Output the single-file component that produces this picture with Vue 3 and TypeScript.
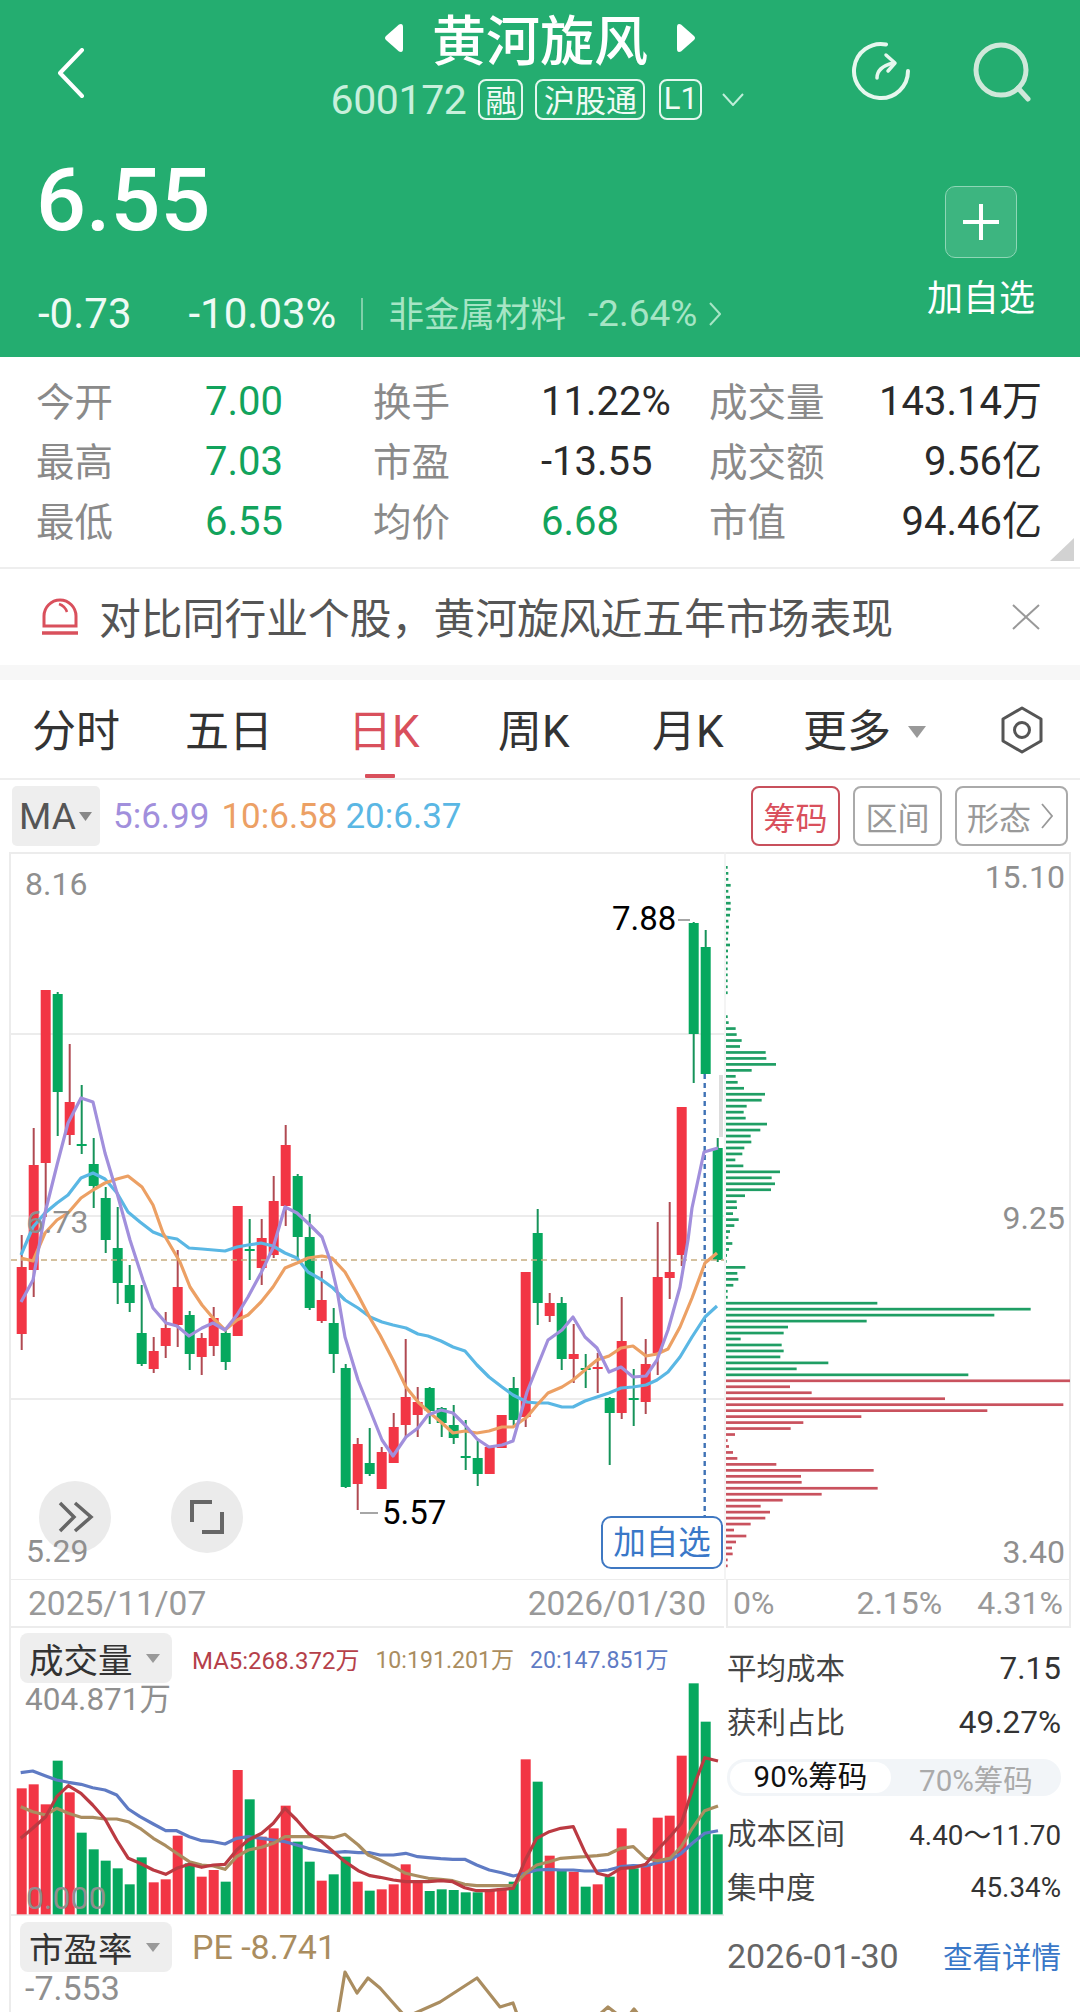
<script setup lang="ts">
type Candle = [number, number, number, number, 'r' | 'g']
const candleData: Candle[] = [
  [1235,1267,1334,1350,'r'],[1128,1165,1270,1297,'r'],[990,990,1163,1217,'r'],[992,994,1092,1136,'g'],
  [1044,1102,1135,1145,'r'],[1085,1144,1146,1154,'g'],[1138,1164,1186,1208,'g'],[1187,1198,1240,1253,'g'],
  [1207,1248,1283,1304,'g'],[1265,1285,1303,1312,'g'],[1285,1333,1364,1366,'g'],[1337,1351,1369,1373,'r'],
  [1312,1328,1346,1358,'r'],[1250,1287,1325,1347,'r'],[1311,1315,1354,1370,'g'],[1333,1338,1357,1375,'r'],
  [1307,1318,1346,1356,'r'],[1330,1333,1362,1370,'g'],[1206,1206,1336,1336,'r'],[1219,1249,1251,1280,'g'],
  [1219,1238,1268,1285,'r'],[1176,1201,1255,1258,'r'],[1125,1145,1206,1226,'r'],[1174,1176,1237,1260,'g'],
  [1214,1237,1308,1310,'g'],[1271,1300,1321,1323,'r'],[1308,1323,1354,1373,'g'],[1364,1368,1487,1488,'g'],
  [1438,1444,1484,1510,'r'],[1428,1463,1474,1476,'g'],[1447,1452,1489,1489,'r'],[1413,1427,1463,1463,'r'],
  [1339,1397,1425,1437,'r'],[1387,1402,1415,1437,'r'],[1387,1388,1411,1424,'g'],[1407,1408,1423,1437,'g'],
  [1405,1425,1438,1444,'g'],[1420,1456,1458,1470,'g'],[1440,1458,1474,1486,'g'],[1447,1447,1474,1474,'r'],
  [1415,1415,1448,1448,'r'],[1377,1388,1420,1427,'g'],[1272,1272,1417,1427,'r'],[1209,1233,1303,1325,'g'],
  [1293,1303,1316,1322,'r'],[1297,1303,1359,1370,'g'],[1324,1354,1359,1383,'r'],[1354,1368,1370,1388,'g'],
  [1353,1367,1369,1393,'r'],[1397,1398,1413,1465,'g'],[1297,1341,1413,1419,'r'],[1369,1398,1400,1426,'g'],
  [1339,1364,1402,1414,'r'],[1222,1277,1353,1375,'r'],[1202,1272,1278,1299,'r'],[1107,1107,1255,1266,'r'],
  [922,923,1034,1083,'g'],[930,947,1074,1074,'g'],[1138,1148,1260,1262,'g']
]
const cx = (i: number) => 21.7 + 12 * i
const candles = candleData.map((c, i) => ({
  x: cx(i), hi: c[0], top: c[1], h: c[2] - c[1], lo: c[3], red: c[4] === 'r'
}))

const ma5 = '21,1302 33,1280 45,1213 57,1165 68,1123 81,1098 93,1102 105,1153 117,1193 130,1240 143,1280 153,1308 166,1323 177,1326 189,1336 202,1328 213,1323 225,1330 237,1315 248,1297 261,1273 273,1248 285,1207 297,1213 310,1225 322,1237 330,1260 337,1290 345,1337 358,1380 370,1410 382,1440 393,1456 406,1437 418,1428 428,1415 441,1410 453,1413 465,1425 477,1439 489,1447 502,1445 513,1441 527,1392 548,1340 562,1330 573,1317 585,1337 597,1348 609,1372 621,1367 633,1377 646,1376 657,1360 668,1330 680,1287 688,1240 692,1208 704,1152 718,1148'
const ma10 = '21,1258 33,1261 45,1233 57,1220 68,1213 81,1198 93,1190 105,1183 117,1179 128,1176 142,1187 153,1205 163,1233 173,1250 180,1262 190,1287 202,1305 213,1318 225,1330 237,1320 248,1315 261,1302 273,1287 285,1268 297,1263 308,1258 322,1256 332,1258 345,1272 358,1295 370,1318 380,1335 393,1360 406,1387 418,1402 430,1413 442,1423 453,1433 465,1431 477,1433 489,1431 502,1427 513,1427 527,1417 537,1405 548,1393 562,1387 573,1380 585,1370 597,1360 609,1356 621,1348 633,1346 646,1356 657,1354 668,1349 680,1327 692,1298 705,1263 717,1253'
const ma20 = '21,1255 33,1227 45,1213 57,1203 68,1195 81,1178 93,1173 105,1179 117,1193 128,1212 140,1222 153,1232 166,1237 177,1239 189,1248 202,1249 225,1251 237,1247 248,1245 261,1243 273,1246 285,1253 297,1258 308,1272 322,1280 333,1288 345,1300 358,1308 370,1317 382,1322 393,1325 406,1328 418,1334 428,1336 441,1341 453,1347 465,1351 477,1365 489,1377 502,1387 513,1395 527,1402 537,1403 548,1403 562,1407 573,1407 585,1401 597,1397 609,1393 621,1388 633,1387 646,1385 657,1380 668,1372 680,1357 692,1337 705,1317 717,1306'

const chipU: number[] = [
  83,85,85,92,85,90,92,92,90,85,87,85,84,90,84,84,83,83,83,83,83,83,0,0,0,
  83,86,107,110,125,120,197,199,228,155,107,113,132,195,185,140,131,137,201,181,152,154,133,127,106,130,240,215,225,213,135,110,111,99,116,103,90,85,97,
  87,81,80,136,112,115,100,83,83,532,992,883,500,264,251,122,245,251,241,385,290,805,
  1110,270,335,735,1090,862,484,310,272,105,83,87,99,112,229,521,303,305,533,365,248,182,210,196,152,102,139,108,96,98,83,83
]
const chips = chipU.map((u, i) => ({ y: 867.33 + i * 5.97 - 1.3, w: u ? (u - 78) / 3 : 0, red: i >= 86 })).filter(c => c.w > 0)

const volTops = [505,493,553,422,517,638,688,722,745,793,712,787,778,647,730,770,750,785,450,538,650,625,557,665,725,782,763,710,785,812,808,793,733,785,813,808,810,817,817,810,805,785,418,485,707,750,755,800,793,770,625,745,735,593,587,407,190,305,643]
const volumes = volTops.map((v, i) => ({ x: cx(i) - 5, y: 1620 + v / 3, h: (883 - v) / 3, red: candleData[i][4] === 'r' }))

const toLine = (pts: number[][], ox: number) => pts.map(p => `${(ox + p[0] / 3).toFixed(1)},${(1620 + p[1] / 3).toFixed(1)}`).join(' ')
const vBlue = toLine([[62,458],[98,453],[137,468],[170,480],[205,487],[243,493],[278,503],[315,510],[350,525],[385,567],[420,590],[460,612],[497,632],[530,632],[568,650],[605,662],[640,665],[675,672],[710,655],[745,650],[785,655],[820,660],[855,665],[890,675],[925,685],[965,692],[1000,698],[1035,695],[1075,698],[1110,698],[1140,705]], 0) + ' ' +
  toLine([[0,705],[40,705],[77,700],[113,710],[145,713],[182,716],[218,718],[254,718],[290,735],[328,750],[365,758],[400,768],[436,760],[470,750],[508,748],[542,750],[580,750],[614,753],[652,753],[685,750],[722,740],[760,737],[797,738],[832,728],[870,720],[904,700],[937,670],[974,640],[1014,632]], 380)
const vTan = toLine([[62,560],[98,575],[137,585],[170,565],[205,580],[243,592],[278,592],[315,597],[350,597],[385,605],[420,625],[460,655],[497,677],[530,700],[568,725],[605,735],[640,738],[675,748],[710,710],[745,690],[785,682],[820,670],[855,650],[890,650],[925,650],[965,650],[1000,653],[1035,643],[1075,675],[1105,705],[1140,720]], 0) + ' ' +
  toLine([[0,720],[40,740],[77,760],[113,768],[145,775],[182,778],[218,782],[254,793],[290,797],[328,797],[365,797],[400,797],[436,760],[470,735],[508,725],[542,715],[580,712],[614,710],[652,707],[685,703],[722,685],[760,680],[797,715],[832,722],[870,715],[904,680],[937,625],[974,572],[1014,558]], 380)
const vRed = toLine([[62,655],[98,625],[137,590],[170,530],[205,497],[243,520],[278,555],[315,597],[350,660],[385,715],[420,730],[460,750],[497,763],[530,745],[568,733],[605,742],[640,735],[675,733],[710,690],[745,660],[785,640],[820,610],[855,565],[890,600],[925,640],[965,665],[1000,695],[1035,725],[1075,752],[1110,767],[1140,772]], 0) + ' ' +
  toLine([[0,772],[40,780],[77,785],[113,785],[145,785],[182,782],[218,785],[254,803],[290,812],[328,812],[365,808],[400,805],[436,720],[470,655],[508,635],[542,625],[580,620],[614,695],[652,760],[685,768],[722,745],[760,743],[797,733],[832,690],[870,650],[904,610],[937,510],[974,413],[1014,423]], 380)
const peLine = '337,2020 345,1972 357,1993 368,1978 380,1988 403,2014 413,2014 440,2002 477,1978 500,2007 513,2003 517,2014'
const peLine2 = '600,2014 608,2007 617,2014 630,2014 634,2009 638,2014'

const stats = [
  { label: '今开', value: '7.00', tone: 'green', label2: '换手', value2: '11.22%', tone2: 'dark', label3: '成交量', value3: '143.14万' },
  { label: '最高', value: '7.03', tone: 'green', label2: '市盈', value2: '-13.55', tone2: 'dark', label3: '成交额', value3: '9.56亿' },
  { label: '最低', value: '6.55', tone: 'green', label2: '均价', value2: '6.68', tone2: 'green', label3: '市值', value3: '94.46亿' }
]
const tabs = [
  { t: '分时', w: 153 }, { t: '五日', w: 163 }, { t: '日K', w: 150, on: true },
  { t: '周K', w: 154 }, { t: '月K', w: 151 }
]
const grid = [1034, 1216, 1399, 1580]
</script>

<template>
  <div class="page">
    <header class="hero">
      <div class="nav">
        <div class="nav-left">
          <svg width="30" height="50" viewBox="0 0 30 50"><path d="M26 2 L4 25 L26 48" fill="none" stroke="#fff" stroke-width="4" stroke-linecap="round" stroke-linejoin="round" /></svg>
        </div>
        <div class="nav-center">
          <div class="title-row">
            <svg width="20" height="30" viewBox="0 0 20 30"><path d="M15 1.500 Q19 0 19 4 L19 26 Q19 30 15 28.500 L2 17 Q0 15 2 13 Z" fill="#fff" /></svg>
            <span class="title">黄河旋风</span>
            <svg width="20" height="30" viewBox="0 0 20 30"><path d="M5 1.500 Q1 0 1 4 L1 26 Q1 30 5 28.500 L18 17 Q20 15 18 13 Z" fill="#fff" /></svg>
          </div>
          <div class="code-row">
            <span class="code">600172</span>
            <span class="tag">融</span>
            <span class="tag wide">沪股通</span>
            <span class="tag l1">L1</span>
            <svg class="caret" width="22" height="13" viewBox="0 0 22 13"><path d="M1 1 L11 12 L21 1" fill="none" stroke="#bfeeda" stroke-width="2" /></svg>
          </div>
        </div>
        <div class="nav-right">
          <svg width="62" height="62" viewBox="0 0 62 62">
            <path d="M36 3.500 A27 27 0 1 0 58 30" fill="none" stroke="#e6f7ee" stroke-width="4" stroke-linecap="round" />
            <path d="M27 37 Q27 26 43 22" fill="none" stroke="#e6f7ee" stroke-width="3.500" stroke-linecap="round" />
            <path d="M36 14 L45 22 L38 30" fill="none" stroke="#e6f7ee" stroke-width="3.500" stroke-linecap="round" stroke-linejoin="round" />
          </svg>
          <svg width="62" height="62" viewBox="0 0 62 62">
            <circle cx="29" cy="29" r="25" fill="none" stroke="#cfe8da" stroke-width="5" />
            <path d="M46 47 L56 58" stroke="#cfe8da" stroke-width="5" stroke-linecap="round" />
          </svg>
        </div>
      </div>
      <div class="quote">
        <div class="quote-left">
          <div class="price">6.55</div>
          <div class="change-row">
            <span class="chg">-0.73</span>
            <span class="chg pct">-10.03%</span>
            <span class="sep"></span>
            <span class="industry">非金属材料</span>
            <span class="industry-pct">-2.64%</span>
            <svg width="12" height="24" viewBox="0 0 12 24"><path d="M1 1 L11 12 L1 23" fill="none" stroke="#a6e5c5" stroke-width="2" /></svg>
          </div>
        </div>
        <div class="add">
          <div class="add-box"><svg width="38" height="38" viewBox="0 0 38 38"><path d="M19 1 V37 M1 19 H37" stroke="#fff" stroke-width="4" /></svg></div>
          <div class="add-label">加自选</div>
        </div>
      </div>
    </header>

    <section class="stats">
      <div v-for="r in stats" :key="r.label" class="stat-row">
        <span class="s-label">{{ r.label }}</span>
        <span class="s-value" :class="r.tone">{{ r.value }}</span>
        <span class="s-label">{{ r.label2 }}</span>
        <span class="s-value" :class="r.tone2">{{ r.value2 }}</span>
        <span class="s-label">{{ r.label3 }}</span>
        <span class="s-value dark end">{{ r.value3 }}</span>
      </div>
      <span class="corner"></span>
    </section>

    <section class="alert">
      <svg width="38" height="38" viewBox="0 0 38 38">
        <path d="M3 28 V18 A16 16 0 0 1 35 18 V28 Z" fill="none" stroke="#d9505c" stroke-width="3" />
        <path d="M18 6 Q24 8 26 14" fill="none" stroke="#d9505c" stroke-width="2.500" />
        <path d="M1 35 H37" stroke="#d9505c" stroke-width="3.500" />
      </svg>
      <span class="alert-text">对比同行业个股，黄河旋风近五年市场表现</span>
      <svg class="alert-x" width="28" height="26" viewBox="0 0 28 26"><path d="M1 1 L27 25 M27 1 L1 25" stroke="#999" stroke-width="2" /></svg>
    </section>
    <div class="band"></div>

    <nav class="tabs">
      <div v-for="t in tabs" :key="t.t" class="tab" :class="{ on: t.on }" :style="{ width: t.w + 'px' }">{{ t.t }}</div>
      <div class="tab more">更多<svg width="18" height="12" viewBox="0 0 18 12"><path d="M0 0 H18 L9 12 Z" fill="#999" /></svg></div>
      <svg class="hex" width="44" height="48" viewBox="0 0 44 48">
        <path d="M22 2 L41 13 V35 L22 46 L3 35 V13 Z" fill="none" stroke="#555" stroke-width="3" stroke-linejoin="round" />
        <circle cx="22" cy="24" r="7.500" fill="none" stroke="#555" stroke-width="3" />
      </svg>
    </nav>

    <div class="toolbar">
      <div class="ma-box">MA<svg width="13" height="9" viewBox="0 0 13 9"><path d="M0 0 H13 L6.500 9 Z" fill="#888" /></svg></div>
      <span class="ma m5">5:6.99</span>
      <span class="ma m10">10:6.58</span>
      <span class="ma m20">20:6.37</span>
      <span class="spacer"></span>
      <span class="pill-btn on">筹码</span>
      <span class="pill-btn">区间</span>
      <span class="pill-btn wide">形态<svg width="12" height="26" viewBox="0 0 12 26"><path d="M1 1 L11 13 L1 25" fill="none" stroke="#999" stroke-width="1.800" /></svg></span>
    </div>

    <div class="charts">
      <div class="col-left">
        <svg class="kline" width="724" height="728" viewBox="0 852 724 728">
          <line x1="9" x2="724" y1="853" y2="853" class="gl" />
          <line x1="10" x2="10" y1="852" y2="1581" class="gl" />
          <line v-for="g in grid" :key="g" x1="9" x2="724" :y1="g" :y2="g" class="gl" />
          <text x="25" y="895" class="axis">8.16</text>
          <g v-for="(c, i) in candles" :key="i">
            <line :x1="c.x" :x2="c.x" :y1="c.hi" :y2="c.lo" :stroke="c.red ? '#b04a52' : '#16935a'" stroke-width="2" />
            <rect :x="c.x - 5" :y="c.top" width="10" :height="c.h" :fill="c.red ? '#f23645' : '#06a85e'" />
          </g>
          <line x1="11" x2="724" y1="1260" y2="1260" stroke="#c6ad80" stroke-width="1.500" stroke-dasharray="6 4" />
          <line x1="704.700" x2="704.700" y1="1074" y2="1518" stroke="#3f72b5" stroke-width="2.400" stroke-dasharray="5 4" />
          <polyline :points="ma20" class="ln" stroke="#5ab7e4" />
          <polyline :points="ma10" class="ln" stroke="#eca064" />
          <polyline :points="ma5" class="ln" stroke="#a18fdc" />
          <text x="26" y="1233" class="axis">6.73</text>
          <rect x="719" y="1075" width="4" height="62" fill="#ddd" />
          <text x="612" y="930" class="mark">7.88</text>
          <line x1="678" x2="690" y1="920" y2="920" stroke="#888" stroke-width="1.500" />
          <text x="382" y="1524" class="mark">5.57</text>
          <line x1="360" x2="378" y1="1513" y2="1513" stroke="#888" stroke-width="1.500" />
          <circle cx="75" cy="1517" r="36" fill="#ebebeb" />
          <path d="M60 1503 L74 1517 L60 1531 M75 1503 L91 1517 L75 1531" fill="none" stroke="#666" stroke-width="3.500" />
          <circle cx="207" cy="1517" r="36" fill="#ebebeb" />
          <path d="M192 1522 V1502 H212 M222 1512 V1532 H202" fill="none" stroke="#666" stroke-width="4" />
          <text x="26" y="1562" class="axis">5.29</text>
          <rect x="602" y="1517" width="120" height="51" rx="9" fill="#fff" stroke="#3f78c2" stroke-width="2" />
          <text x="662" y="1554" class="fav" text-anchor="middle">加自选</text>
        </svg>
        <div class="dates"><span>2025/11/07</span><span>2026/01/30</span></div>
        <div class="volume">
          <svg class="vol-svg" width="724" height="384" viewBox="0 1628 724 384">
            <line x1="10" x2="10" y1="1628" y2="2012" class="gl" />
            <line x1="9" x2="724" y1="1915" y2="1915" class="gl" />
            <rect v-for="(b, i) in volumes" :key="i" :x="b.x" :y="b.y" width="10" :height="b.h" :fill="b.red ? '#f23645' : '#06a85e'" />
            <polyline :points="vBlue" class="ln3" stroke="#5f7bc4" />
            <polyline :points="vTan" class="ln3" stroke="#aa8d60" />
            <polyline :points="vRed" class="ln3" stroke="#bb3a42" />
            <text x="26" y="1909" class="axis">0.000</text>
            <polyline :points="peLine" class="ln3" stroke="#aa8d60" />
            <polyline :points="peLine2" class="ln3" stroke="#aa8d60" />
          </svg>
          <div class="ind-head first">
            <span class="ind-box">成交量<svg width="14" height="9" viewBox="0 0 14 9"><path d="M0 0 H14 L7 9 Z" fill="#999" /></svg></span>
            <span class="ind-ma lead c-red">MA5:268.372万</span>
            <span class="ind-ma c-tan">10:191.201万</span>
            <span class="ind-ma c-blue">20:147.851万</span>
          </div>
          <div class="ind-sub first-sub">404.871万</div>
          <div class="ind-head second">
            <span class="ind-box">市盈率<svg width="14" height="9" viewBox="0 0 14 9"><path d="M0 0 H14 L7 9 Z" fill="#999" /></svg></span>
            <span class="ind-pe c-tan">PE -8.741</span>
          </div>
          <div class="ind-sub second-sub">-7.553</div>
        </div>
      </div>

      <div class="col-right">
        <svg class="chips" width="356" height="728" viewBox="724 852 356 728">
          <line x1="724" x2="1071" y1="853" y2="853" class="gl" />
          <line x1="726" x2="1071" y1="1580" y2="1580" class="gl" />
          <line x1="725" x2="725" y1="852" y2="1580" stroke="#f0f0f0" stroke-width="1.500" />
          <line x1="1070" x2="1070" y1="852" y2="1580" class="gl" />
          <rect v-for="(c, i) in chips" :key="i" x="726" :y="c.y" :width="c.w" height="2.700" :fill="c.red ? '#c9525e' : '#1f9e64'" />
          <text x="1065" y="888" text-anchor="end" class="axis">15.10</text>
          <text x="1065" y="1229" text-anchor="end" class="axis">9.25</text>
          <text x="1065" y="1563" text-anchor="end" class="axis">3.40</text>
        </svg>
        <div class="pcts"><span>0%</span><span class="mid">2.15%</span><span class="last">4.31%</span></div>
        <div class="info">
          <div class="info-row"><span class="il">平均成本</span><span class="iv big">7.15</span></div>
          <div class="info-row"><span class="il">获利占比</span><span class="iv big">49.27%</span></div>
          <div class="seg"><span class="seg-on">90%筹码</span><span class="seg-off">70%筹码</span></div>
          <div class="info-row"><span class="il">成本区间</span><span class="iv">4.40～11.70</span></div>
          <div class="info-row"><span class="il">集中度</span><span class="iv">45.34%</span></div>
          <div class="info-row foot"><span class="foot-date">2026-01-30</span><span class="foot-link">查看详情</span></div>
        </div>
      </div>
    </div>
  </div>
</template>

<style scoped>
.page { width: 1080px; height: 2012px; overflow: hidden; background: #fff; font-family: Roboto, "Noto Sans CJK SC", sans-serif; color: #333; }
svg { display: block; flex: none; }

.hero { height: 357px; background: #24ad70; color: #fff; }
.nav { height: 128px; display: grid; grid-template-columns: 1fr auto 1fr; }
.nav-left { padding: 48px 0 0 56px; }
.nav-center { display: flex; flex-direction: column; align-items: center; }
.title-row { display: flex; align-items: center; gap: 28px; height: 76px; }
.title { font-size: 54px; line-height: 76px; font-family: "Noto Sans CJK SC", sans-serif; font-weight: 500; }
.code-row { display: flex; align-items: center; height: 41px; margin-top: 3px; margin-left: -5px; }
.code { font-size: 41px; letter-spacing: -0.4px; color: #c8f0dc; margin-right: 12px; }
.tag { height: 41px; width: 45px; box-sizing: border-box; border: 2px solid #e4f7ee; border-radius: 8px; font-size: 31px; line-height: 35px; text-align: center; color: #f0fbf5; margin-right: 12px; font-family: "Noto Sans CJK SC", sans-serif; }
.tag.wide { width: 110px; margin-right: 14px; }
.tag.l1 { width: 43px; font-family: Roboto, sans-serif; margin-right: 20px; }
.nav-right { display: flex; justify-content: flex-end; gap: 60px; padding: 41px 46px 0 0; }

.quote { display: flex; justify-content: space-between; padding: 0 46px 0 36px; }
.price { font-size: 88px; line-height: 90px; margin-top: 27px; font-weight: 500; }
.change-row { display: flex; align-items: center; height: 40px; margin-top: 49px; padding-left: 2px; }
.chg { font-size: 42px; color: #eefaf4; line-height: 40px; }
.pct { margin-left: 57px; }
.sep { width: 2px; height: 32px; background: #7fd0aa; margin: 0 25px; }
.industry { font-size: 35.500px; color: #a6e5c5; line-height: 36px; font-family: "Noto Sans CJK SC", sans-serif; padding-bottom: 4px; }
.industry-pct { font-size: 37px; color: #a6e5c5; margin: 0 12px 0 22px; line-height: 40px; }
.add { display: flex; flex-direction: column; align-items: center; width: 106px; padding-top: 58px; }
.add-box { width: 72px; height: 72px; box-sizing: border-box; border: 1.500px solid #8ed6b6; border-radius: 10px; background: #3db580; display: flex; align-items: center; justify-content: center; }
.add-label { font-size: 36px; line-height: 40px; margin-top: 17px; font-family: "Noto Sans CJK SC", sans-serif; white-space: nowrap; }

.stats { position: relative; height: 212px; box-sizing: border-box; padding-top: 15px; border-bottom: 2px solid #eee; }
.stat-row { display: grid; grid-template-columns: 169px 168px 168px 168px 168px 165px; height: 60px; align-items: center; padding-left: 36px; }
.s-label { font-size: 38.500px; color: #8a8a8a; line-height: 54px; padding-bottom: 6px; font-family: "Noto Sans CJK SC", sans-serif; white-space: nowrap; }
.s-value { font-size: 40px; line-height: 60px; white-space: nowrap; }
.s-value.green { color: #12a35c; }
.s-value.dark { color: #2a2a2a; }
.s-value.end { text-align: right; }
.corner { position: absolute; right: 6px; bottom: 6px; width: 0; height: 0; border-left: 24px solid transparent; border-bottom: 23px solid #d2d2d2; }

.alert { height: 96px; display: flex; align-items: center; padding: 0 40px 0 41px; }
.alert-text { flex: 1; font-size: 41.800px; color: #555; margin-left: 20px; line-height: 60px; padding-bottom: 2px; font-family: "Noto Sans CJK SC", sans-serif; white-space: nowrap; }
.band { height: 15px; background: #f7f7f7; }

.tabs { height: 100px; display: flex; align-items: center; padding-left: 32px; border-bottom: 2px solid #eee; box-sizing: border-box; }
.tab { font-size: 44px; color: #333; position: relative; line-height: 94px; padding-top: 6px; font-family: Roboto, "Noto Sans CJK SC", sans-serif; }
.tab.on { color: #d9505c; }
.tab.on::after { content: ""; position: absolute; left: 17px; bottom: 1px; width: 30px; height: 4px; background: #d9505c; border-radius: 1px; }
.tab.more { display: flex; align-items: center; gap: 17px; width: 197px; }
.hex { margin-top: 2px; }

.toolbar { height: 72px; display: flex; align-items: center; padding: 0 12px; box-sizing: border-box; }
.ma-box { width: 88px; height: 60px; background: #eee; border-radius: 5px; font-size: 37px; color: #555; display: flex; align-items: center; padding-left: 7px; box-sizing: border-box; gap: 3px; }
.ma { font-size: 35px; }
.m5 { color: #a18fdc; margin-left: 13px; }
.m10 { color: #eca064; margin-left: 12px; }
.m20 { color: #5ab7e4; margin-left: 8px; }
.spacer { flex: 1; }
.pill-btn { height: 60px; width: 89px; box-sizing: border-box; border: 2px solid #aaa; border-radius: 8px; color: #999; font-size: 32px; display: flex; align-items: center; justify-content: center; margin-left: 13px; font-family: "Noto Sans CJK SC", sans-serif; gap: 10px; }
.pill-btn.on { border-color: #c8505c; color: #d9505c; }
.pill-btn.wide { width: 113px; justify-content: flex-start; padding-left: 10px; }

.charts { display: grid; grid-template-columns: 724px 356px; }
.col-left { width: 724px; }
.gl { stroke: #ececec; stroke-width: 2; }
.ln { fill: none; stroke-width: 3.200; stroke-linejoin: round; }
.ln3 { fill: none; stroke-width: 3.200; stroke-linejoin: round; }
.axis { font-size: 32px; fill: #8f8f8f; font-family: Roboto, sans-serif; }
.mark { font-size: 33px; fill: #000; font-family: Roboto, sans-serif; }
.fav { font-size: 32.500px; fill: #3a78c8; font-family: "Noto Sans CJK SC", sans-serif; }
.dates { height: 48px; margin-left: 9px; padding: 0 18px 0 17px; border-left: 2px solid #ececec; border-bottom: 2px solid #ececec; box-sizing: border-box; display: flex; justify-content: space-between; align-items: center; font-size: 33.500px; color: #999; }
.volume { position: relative; height: 384px; }
.vol-svg { position: absolute; left: 0; top: 0; }
.ind-head { position: absolute; left: 20px; display: flex; align-items: center; }
.ind-head.first { top: 5px; }
.ind-head.second { top: 294px; }
.ind-box { width: 152px; height: 50px; background: #eee; border-radius: 8px; font-size: 34.500px; color: #333; display: flex; align-items: center; padding-left: 9px; box-sizing: border-box; gap: 13px; font-family: "Noto Sans CJK SC", sans-serif; }
.ind-ma { font-size: 23.100px; white-space: nowrap; margin-left: 16px; }
.ind-ma.lead { font-size: 24px; margin-left: 20px; }
.c-red { color: #b5404a; }
.c-tan { color: #aa8d60; }
.c-blue { color: #5f7bc4; }
.ind-pe { font-size: 34px; margin-left: 20px; white-space: nowrap; }
.ind-sub { position: absolute; left: 25px; font-size: 31.500px; line-height: 36px; color: #8f8f8f; }
.first-sub { top: 54px; }
.second-sub { top: 342px; font-size: 34px; }

.col-right { width: 356px; }
.pcts { height: 48px; margin-left: 2px; width: 345px; box-sizing: border-box; border-left: 2px solid #ececec; border-right: 2px solid #ececec; border-bottom: 2px solid #ececec; display: flex; align-items: center; padding: 0 6px 0 5px; font-size: 32px; color: #999; }
.pcts .mid { margin-left: 82px; }
.pcts .last { margin-left: auto; }
.info { padding: 0 19px 0 3px; height: 384px; box-sizing: border-box; }
.info-row { height: 54px; display: flex; justify-content: space-between; align-items: center; }
.il { font-size: 29.500px; color: #444; line-height: 44px; padding-bottom: 5px; font-family: "Noto Sans CJK SC", sans-serif; }
.iv { font-size: 27.800px; color: #333; white-space: nowrap; }
.iv.big { font-size: 31.500px; font-weight: 400; }
.info-row:first-child { margin-top: 13px; }
.seg { height: 37px; margin: 10px 0; background: #f2f5f8; border-radius: 18px; display: flex; align-items: center; padding-left: 3px; font-size: 29.500px; font-family: Roboto, "Noto Sans CJK SC", sans-serif; }
.seg-on { width: 161px; height: 31px; line-height: 31px; background: #fff; border-radius: 16px; color: #111; text-align: center; }
.seg-off { flex: 1; text-align: center; color: #aaa; }
.foot { margin-top: 15px; }
.foot-date { font-size: 34px; color: #666; }
.foot-link { font-size: 29.500px; color: #3a78c8; line-height: 44px; padding-bottom: 3px; font-family: "Noto Sans CJK SC", sans-serif; }
</style>
